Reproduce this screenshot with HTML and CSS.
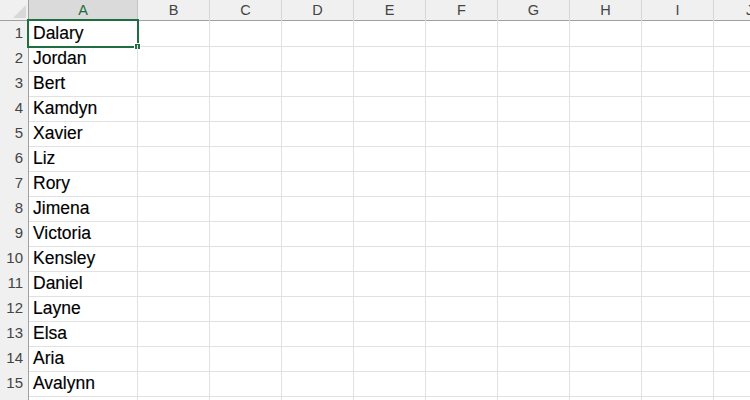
FILE: index.html
```html
<!DOCTYPE html>
<html>
<head>
<meta charset="utf-8">
<link rel="stylesheet" href="styles.css">
</head>
<body>
<div class="sheet">
  <div class="corner"><span class="tri"></span></div>
  <div class="colhead sel">A</div>
  <div class="colhead">B</div>
  <div class="colhead">C</div>
  <div class="colhead">D</div>
  <div class="colhead">E</div>
  <div class="colhead">F</div>
  <div class="colhead">G</div>
  <div class="colhead">H</div>
  <div class="colhead">I</div>
  <div class="colhead last">J</div>
</div>
<div class="body" id="body"></div>
<script src="app.js"></script>
</body>
</html>
```
FILE: app.js
```js
const names = ["Dalary","Jordan","Bert","Kamdyn","Xavier","Liz","Rory","Jimena","Victoria","Kensley","Daniel","Layne","Elsa","Aria","Avalynn",""];
const body = document.getElementById("body");
names.forEach((n, i) => {
  const row = document.createElement("div");
  row.className = "row";
  const h = document.createElement("div");
  h.className = "rowhead";
  h.textContent = i < 15 ? String(i + 1) : "";
  row.appendChild(h);
  for (let c = 0; c < 10; c++) {
    const cell = document.createElement("div");
    cell.className = "cell" + (c === 0 ? " wide" : "") + (c === 9 ? " last" : "");
    if (c === 0) {
      cell.textContent = n;
      if (i === 0) {
        const s = document.createElement("div");
        s.className = "selection";
        const f = document.createElement("div");
        f.className = "handle";
        s.appendChild(f);
        cell.appendChild(s);
      }
    }
    row.appendChild(cell);
  }
  body.appendChild(row);
});
```
FILE: styles.css
```css
html, body {
  margin: 0;
  padding: 0;
  background: #ffffff;
  overflow: hidden;
  width: 750px;
  height: 400px;
}
body {
  font-family: "Liberation Sans", Arial, sans-serif;
}
.sheet, .row {
  display: grid;
  grid-template-columns: 29px 109px repeat(8, 72px) 72px;
}
.sheet {
  height: 20px;
}
.corner {
  position: relative;
  background: #f0f0f0;
  border-right: 1px solid #a0a0a0;
  border-bottom: 1px solid #a0a0a0;
  box-sizing: border-box;
}
.tri {
  position: absolute;
  right: 2px;
  bottom: 2px;
  width: 0;
  height: 0;
  border-left: 13px solid transparent;
  border-bottom: 13px solid #d8d8d8;
}
.colhead {
  box-sizing: border-box;
  background: #f0f0f0;
  border-right: 1px solid #d6d6d6;
  border-bottom: 1px solid #a0a0a0;
  font-size: 14.5px;
  color: #444444;
  text-align: center;
  line-height: 20px;
}
.colhead.sel {
  background: #dadada;
  color: #1e6b40;
  border-right-color: #c4c4c4;
}
.row {
  height: 25px;
}
.rowhead {
  box-sizing: border-box;
  background: #f0f0f0;
  border-right: 1px solid #a0a0a0;
  border-bottom: 1px solid #d6d6d6;
  font-size: 15px;
  color: #444444;
  text-align: right;
  padding-right: 5px;
  line-height: 26px;
}
.cell {
  box-sizing: border-box;
  border-right: 1px solid #e1e1e1;
  border-bottom: 1px solid #e1e1e1;
  font-size: 17.5px;
  color: #000000;
  line-height: 26px;
  padding-left: 4px;
  white-space: nowrap;
  -webkit-text-stroke: 0.15px #000000;
}
.wide {
  position: relative;
}
.selection {
  position: absolute;
  left: -2px;
  top: -1px;
  right: -2px;
  bottom: -2px;
  border: 2px solid #1e6e41;
  pointer-events: none;
}
.handle {
  position: absolute;
  right: -4px;
  bottom: -4px;
  width: 5px;
  height: 5px;
  background: #1e6e41;
  border: 1px solid #ffffff;
}
```
